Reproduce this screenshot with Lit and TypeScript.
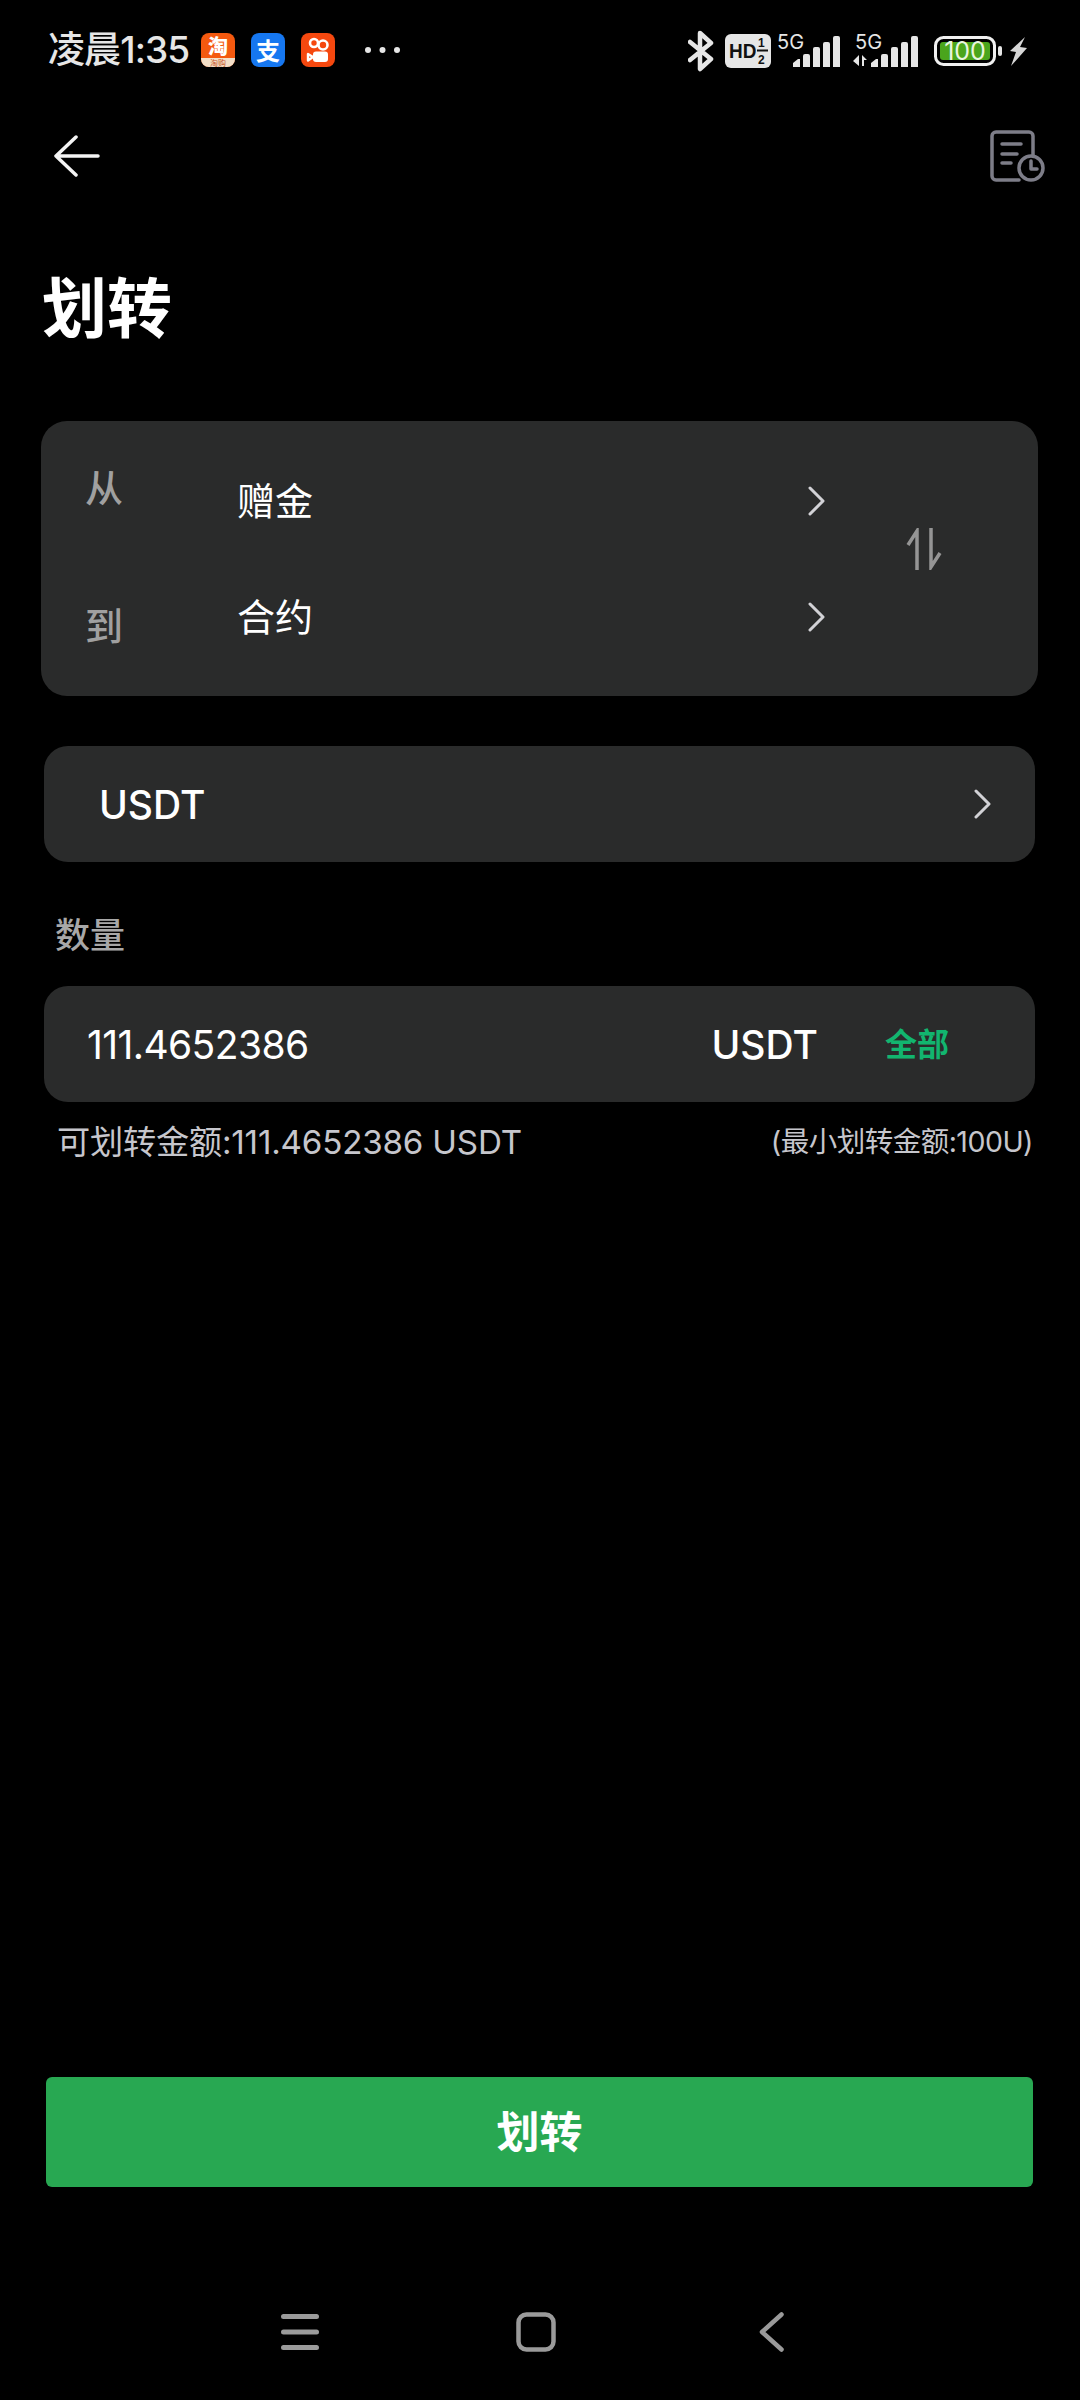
import { LitElement, html, css, svg } from "lit";
import { customElement } from "lit/decorators.js";

const chevron = html`<svg class="chev" width="17" height="30" viewBox="0 0 17 30" fill="none"><path d="M2 2 L15 15 L2 28" stroke="#d2d2d6" stroke-width="3" stroke-linecap="round" stroke-linejoin="round"/></svg>`;

const tops = [59, 54, 47, 42, 36];
const bars = (xs: number[]) =>
  xs.map(
    (x, i) => svg`<path d="M${x} 67 V${tops[i] + (i === 0 ? 4 : 2)} ${i === 0 ? `L${x + 5} ${tops[i]}` : `a2 2 0 0 1 2-2`} h${i === 0 ? 2 : 3} ${i === 0 ? "" : "a2 2 0 0 1 2 2"} V67 z" fill="#e6e6e6"/>`
  );

@customElement("app-root")
export class AppRoot extends LitElement {
  static styles = css`
    :host {
      display: flex;
      flex-direction: column;
      width: 1080px;
      height: 2400px;
      background: #000;
      color: #fff;
      font-family: "Inter", "Noto Sans CJK SC", sans-serif;
      overflow: hidden;
    }
    svg { display: block; flex: none; }
    .status { display: flex; align-items: center; height: 100px; padding-left: 48px; }
    .time { font-size: 37px; line-height: 40px; width: 153px; color: #e6e6e6; font-weight: 500; letter-spacing: -0.9px; white-space: nowrap; }
    .apps { display: flex; gap: 16px; }
    .app { width: 34px; height: 34px; border-radius: 8px; display: flex; flex-direction: column; align-items: center; font-family: "Noto Sans CJK SC", sans-serif; font-weight: 700; }
    .tb { background: #f4590f; }
    .tb b { font-size: 20px; line-height: 25px; height: 25px; }
    .tb i { display: block; width: 34px; height: 9px; line-height: 9px; font-size: 8px; font-style: normal; font-weight: 400; text-align: center; color: #c9562a; background: #f3dfc8; border-radius: 0 0 8px 8px; }
    .zfb { background: #1677f0; font-size: 24px; line-height: 34px; }
    .dots { margin-left: 30px; }
    .sys { margin-left: auto; margin-right: 53px; }
    .nav { display: flex; align-items: center; justify-content: space-between; height: 112px; padding: 0 35px 0 54px; }
    .title { margin: 44px 0 0 42px; font-size: 65px; line-height: 96px; font-weight: 700; font-family: "Noto Sans CJK SC", sans-serif; height: 100px; }
    main { display: flex; flex-direction: column; padding: 0 45px 0 44px; margin-top: 65px; }
    .card { background: #2a2b2b; border-radius: 24px; display: flex; align-items: center; }
    .direction { margin: 0 -3px 50px; height: 275px; align-items: flex-start; border-radius: 26px; }
    .labels { display: flex; flex-direction: column; width: 196px; padding: 40px 0 0 44px; box-sizing: border-box; gap: 88px; }
    .labels span { font-size: 38px; line-height: 50px; font-weight: 500; color: #a0a0a0; font-family: "Noto Sans CJK SC", sans-serif; }
    .values { display: flex; flex-direction: column; gap: 40px; width: 588px; padding-top: 42px; }
    .value { display: flex; align-items: center; justify-content: space-between; height: 76px; font-size: 38px; font-family: "Noto Sans CJK SC", sans-serif; }
    .value span { margin-top: -6px; }
    .swap { margin: 107px 0 0 81px; }
    .coin { height: 116px; justify-content: space-between; padding: 0 44px 0 55px; font-size: 39px; font-weight: 500; }
    .qty-label { margin: 46px 0 26px 11px; height: 52px; font-size: 35px; line-height: 50px; font-weight: 500; color: #a8a8a8; font-family: "Noto Sans CJK SC", sans-serif; }
    .amount { height: 116px; padding: 0 86px 0 43px; }
    .num { flex: 1; font-size: 39px; letter-spacing: -0.6px; }
    .unit { font-size: 39px; font-weight: 500; }
    .all { margin-left: 67px; margin-top: -4px; color: #12b56f; font-size: 32px; font-weight: 700; font-family: "Noto Sans CJK SC", sans-serif; }
    .hints { display: flex; align-items: center; justify-content: space-between; margin-top: 17px; height: 40px; padding: 0 2px 0 13px; color: #c6c6cc; white-space: nowrap; }
    .hints .a { font-size: 33.2px; letter-spacing: -0.2px; }
    .hints .b { font-size: 28.5px; letter-spacing: -0.5px; }
    .spacer { flex: 1; }
    .btn { display: flex; align-items: center; justify-content: center; height: 110px; margin: 0 47px 77px 46px; background: #28a852; border-radius: 6px; font-size: 43px; font-weight: 700; font-family: "Noto Sans CJK SC", sans-serif; }
    .btn span { margin-top: -6px; }
    .sysnav { display: flex; align-items: center; height: 136px; padding-left: 281px; }
    .sysnav .home { margin-left: 197px; }
    .sysnav .back { margin-left: 203px; }
  `;

  render() {
    return html`
      <div class="status">
        <span class="time">凌晨1:35</span>
        <div class="apps">
          <div class="app tb"><b>淘</b><i>淘购</i></div>
          <div class="app zfb">支</div>
          <svg width="34" height="34" viewBox="0 0 34 34">
            <rect width="34" height="34" rx="8" fill="#f5480f"/>
            <circle cx="13" cy="10" r="4" fill="none" stroke="#fff" stroke-width="2.600"/>
            <circle cx="22" cy="12" r="4.500" fill="none" stroke="#fff" stroke-width="2.600"/>
            <rect x="12" y="18.500" width="15" height="10.500" rx="3" fill="#fff"/>
            <path d="M12 24 L7 21 V27.500 Z" fill="none" stroke="#fff" stroke-width="2.400" stroke-linejoin="round"/>
          </svg>
        </div>
        <svg class="dots" width="35" height="6" viewBox="0 0 35 6" fill="#e6e6e6">
          <circle cx="3" cy="3" r="3"/><circle cx="17.500" cy="3" r="3"/><circle cx="32" cy="3" r="3"/>
        </svg>
        <svg class="sys" width="339" height="100" viewBox="688 0 339 100">
          <path d="M690 42 L711 59 L700 69 V33 L711 43 L690 60" fill="none" stroke="#e6e6e6" stroke-width="4.500" stroke-linejoin="round" stroke-linecap="round"/>
          <rect x="725" y="34" width="46" height="34" rx="6" fill="#e6e6e6"/>
          <text transform="translate(729 58) scale(1 1.1)" font-size="19" font-weight="700" fill="#111" font-family="Liberation Sans">HD</text>
          <text x="758" y="47" font-size="12" font-weight="700" fill="#111" font-family="Liberation Sans">1</text>
          <rect x="757" y="49.500" width="11" height="2" fill="#111"/>
          <text x="758" y="64" font-size="12" font-weight="700" fill="#111" font-family="Liberation Sans">2</text>
          <text x="777" y="49" font-size="20" fill="#e6e6e6" font-family="Inter">5G</text>
          ${bars([793, 803, 813, 823, 833])}
          <text x="855" y="49" font-size="20" fill="#e6e6e6" font-family="Inter">5G</text>
          <path d="M859 55 v11 l-6-5 z M862 55 l5 5 h-3 v6 h-2 z" fill="#e6e6e6"/>
          ${bars([871, 881, 891, 901, 911])}
          <rect x="935.500" y="37.500" width="59" height="27" rx="8" fill="none" stroke="#f0f0f0" stroke-width="3"/>
          <rect x="940" y="42" width="50" height="18" rx="3" fill="#4aa51c"/>
          <text x="965" y="60" text-anchor="middle" font-size="25" fill="#e8f5df" font-family="Inter">100</text>
          <rect x="998" y="46" width="4" height="10" rx="2" fill="#e6e6e6"/>
          <path d="M1025 37 L1010 51 L1016 52 L1011 66 L1027 48 L1020 47 Z" fill="#d6d6d6"/>
        </svg>
      </div>

      <div class="nav">
        <svg width="46" height="42" viewBox="0 0 46 42" fill="none" stroke="#f4f4f4" stroke-width="3.500" stroke-linecap="round" stroke-linejoin="round">
          <path d="M22 2 L2 21 L22 40 M2 21 H44"/>
        </svg>
        <svg width="55" height="52" viewBox="0 0 55 52" fill="none" stroke="#7d7d88" stroke-width="3.500" stroke-linecap="round" stroke-linejoin="round">
          <path d="M29 50 H6 a4 4 0 0 1-4-4 V6 a4 4 0 0 1 4-4 H39 a4 4 0 0 1 4 4 V26"/>
          <path d="M12 14 H31 M12 24 H27 M12 33 H21"/>
          <circle cx="41" cy="38" r="12"/>
          <path d="M41 31 V39 H47"/>
        </svg>
      </div>

      <div class="title">划转</div>

      <main>
        <div class="card direction">
          <div class="labels"><span>从</span><span>到</span></div>
          <div class="values">
            <div class="value"><span>赠金</span>${chevron}</div>
            <div class="value"><span>合约</span>${chevron}</div>
          </div>
          <svg class="swap" width="36" height="42" viewBox="0 0 36 42" fill="none" stroke="#959595" stroke-width="3.500" stroke-linejoin="miter">
            <path d="M11 42 V3 L2 17"/>
            <path d="M25 0 V39 L34 25"/>
          </svg>
        </div>

        <div class="card coin"><span>USDT</span>${chevron}</div>

        <div class="qty-label">数量</div>

        <div class="card amount">
          <span class="num">111.4652386</span>
          <span class="unit">USDT</span>
          <span class="all">全部</span>
        </div>

        <div class="hints">
          <span class="a">可划转金额:111.4652386 USDT</span>
          <span class="b">(最小划转金额:100U)</span>
        </div>
      </main>

      <div class="spacer"></div>

      <div class="btn"><span>划转</span></div>

      <div class="sysnav">
        <svg width="38" height="36" viewBox="0 0 38 36" fill="#9a9a9a">
          <rect y="0" width="38" height="5" rx="2.500"/><rect y="15.500" width="38" height="5" rx="2.500"/><rect y="31" width="38" height="5" rx="2.500"/>
        </svg>
        <svg class="home" width="40" height="40" viewBox="0 0 40 40" fill="none">
          <rect x="2.500" y="2.500" width="35" height="35" rx="8" stroke="#9a9a9a" stroke-width="4.500"/>
        </svg>
        <svg class="back" width="25" height="40" viewBox="0 0 25 40" fill="none">
          <path d="M22.500 2.500 L3 20 L22.500 37.500" stroke="#9a9a9a" stroke-width="4.500" stroke-linecap="round" stroke-linejoin="round"/>
        </svg>
      </div>
    `;
  }
}
